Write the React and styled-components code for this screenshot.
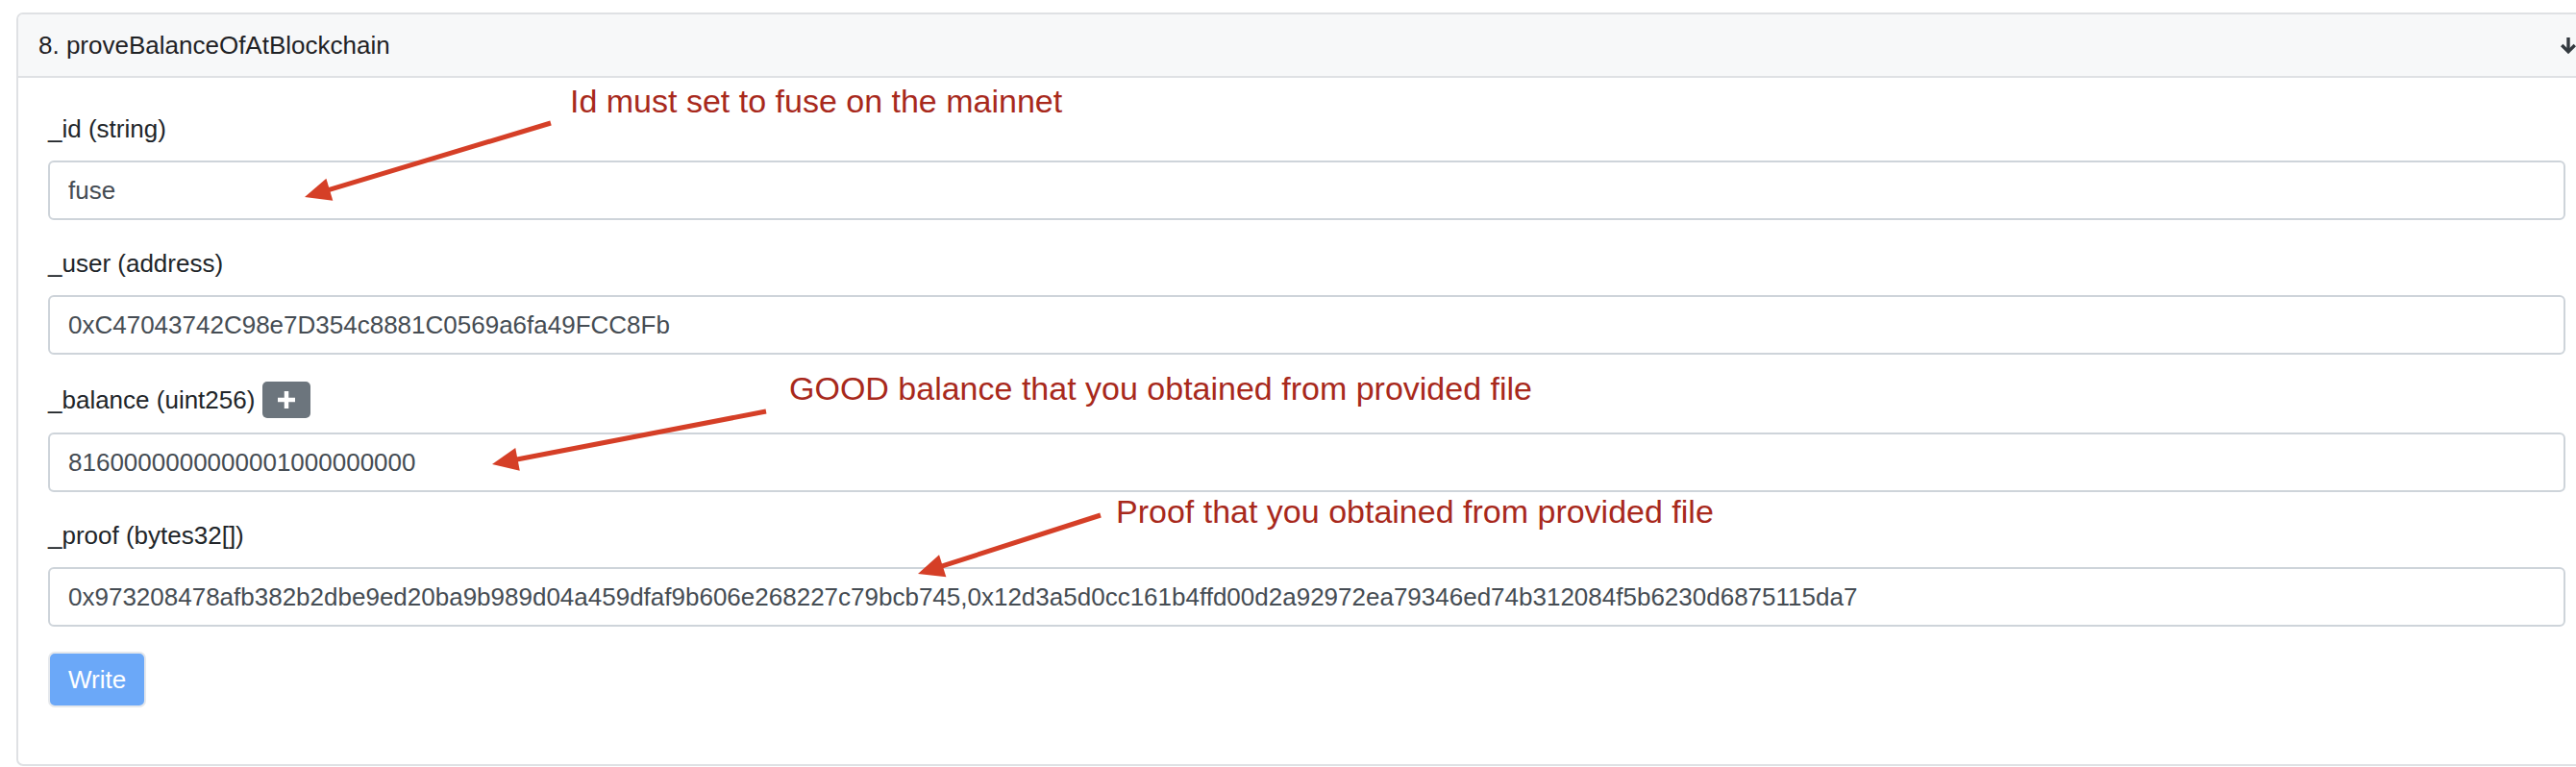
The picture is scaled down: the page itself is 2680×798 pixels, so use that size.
import React from 'react';
import styled, { createGlobalStyle } from 'styled-components';

const GlobalStyle = createGlobalStyle`
  html, body {
    margin: 0;
    background: #ffffff;
    overflow: hidden;
  }
  body {
    font-family: "Liberation Sans", Arial, Helvetica, sans-serif;
    color: #212529;
  }
`;

const Page = styled.div`
  position: relative;
  width: 2680px;
  height: 798px;
  padding: 13px 0 0 17px;
  box-sizing: border-box;
`;

const Card = styled.section`
  width: 2685px;
  box-sizing: border-box;
  border: 2px solid #dfe1e4;
  border-radius: 7px;
  background: #ffffff;
  overflow: hidden;
`;

const CardHeader = styled.header`
  display: flex;
  align-items: center;
  justify-content: space-between;
  height: 66px;
  box-sizing: border-box;
  padding: 0 19px 0 21px;
  background: #f7f8f9;
  border-bottom: 2px solid #dfe1e4;
  font-size: 26px;
  color: #1f2225;
`;

const CardBody = styled.div`
  padding: 34px 31px 59px 31px;
`;

const FormGroup = styled.div`
  margin-bottom: 26px;
`;

const Label = styled.label`
  display: flex;
  align-items: center;
  gap: 8px;
  height: ${({ $tall }) => ($tall ? '42px' : '39px')};
  margin-bottom: 13px;
  font-size: 26px;
  line-height: 39px;
  color: #212529;
`;

const Input = styled.div`
  display: flex;
  align-items: center;
  height: 62px;
  box-sizing: border-box;
  padding: 0 19px;
  border: 2px solid #ced4da;
  border-radius: 6px;
  font-size: 26px;
  color: #454c53;
  white-space: nowrap;
  overflow: hidden;
`;

const AddButton = styled.span`
  display: inline-flex;
  align-items: center;
  justify-content: center;
  width: 50px;
  height: 38px;
  border-radius: 5px;
  background: #6c757d;
`;

const WriteButton = styled.button`
  display: block;
  height: 58px;
  padding: 0 19px;
  border: 2px solid #e5e8ec;
  border-radius: 7px;
  background: #6ba8f8;
  color: #ffffff;
  font-family: inherit;
  font-size: 26px;
`;

const Note = styled.div`
  position: absolute;
  left: ${({ $x }) => $x}px;
  top: ${({ $y }) => $y}px;
  font-size: 34px;
  line-height: 1;
  color: #a8291c;
  white-space: nowrap;
`;

const Overlay = styled.svg`
  position: absolute;
  left: 0;
  top: 0;
  pointer-events: none;
`;

const arrows = [
  { tail: [573, 128], tip: [317, 205] },
  { tail: [797, 428], tip: [512, 483] },
  { tail: [1145, 536], tip: [955, 597] },
];

function Arrow({ tail, tip }) {
  const dx = tip[0] - tail[0];
  const dy = tip[1] - tail[1];
  const len = Math.hypot(dx, dy);
  const ux = dx / len;
  const uy = dy / len;
  const headLen = 27;
  const half = 12;
  const bx = tip[0] - ux * headLen;
  const by = tip[1] - uy * headLen;
  const pts = [
    `${tip[0]},${tip[1]}`,
    `${bx - uy * half},${by + ux * half}`,
    `${bx + uy * half},${by - ux * half}`,
  ].join(' ');
  return (
    <g>
      <line
        x1={tail[0]}
        y1={tail[1]}
        x2={bx + ux * 2}
        y2={by + uy * 2}
        stroke="#d53f27"
        strokeWidth="5"
      />
      <polygon points={pts} fill="#d53f27" />
    </g>
  );
}

const ArrowDown = () => (
  <svg width="18" height="18" viewBox="0 0 18 18">
    <path d="M9 1 V16" stroke="#343a40" strokeWidth="3.4" fill="none" />
    <path d="M2.2 9 L9 15.8 L15.8 9" stroke="#343a40" strokeWidth="3.4" fill="none" />
  </svg>
);

const Plus = () => (
  <svg width="22" height="22" viewBox="0 0 22 22">
    <path d="M11 2 V20 M2 11 H20" stroke="#ffffff" strokeWidth="4.5" />
  </svg>
);

const fields = [
  { label: '_id (string)', value: 'fuse' },
  { label: '_user (address)', value: '0xC47043742C98e7D354c8881C0569a6fa49FCC8Fb' },
  { label: '_balance (uint256)', value: '8160000000000001000000000', add: true },
  {
    label: '_proof (bytes32[])',
    value:
      '0x973208478afb382b2dbe9ed20ba9b989d04a459dfaf9b606e268227c79bcb745,0x12d3a5d0cc161b4ffd00d2a92972ea79346ed74b312084f5b6230d6875115da7',
  },
];

export default function App() {
  return (
    <>
      <GlobalStyle />
      <Page>
        <Card>
          <CardHeader>
            <span>8. proveBalanceOfAtBlockchain</span>
            <ArrowDown />
          </CardHeader>
          <CardBody>
            {fields.map((f) => (
              <FormGroup key={f.label}>
                <Label $tall={f.add}>
                  {f.label}
                  {f.add && (
                    <AddButton>
                      <Plus />
                    </AddButton>
                  )}
                </Label>
                <Input>{f.value}</Input>
              </FormGroup>
            ))}
            <WriteButton>Write</WriteButton>
          </CardBody>
        </Card>

        <Note $x={593} $y={88}>Id must set to fuse on the mainnet</Note>
        <Note $x={821} $y={387}>GOOD balance that you obtained from provided file</Note>
        <Note $x={1161} $y={515}>Proof that you obtained from provided file</Note>

        <Overlay width="2680" height="798">
          {arrows.map((a, i) => (
            <Arrow key={i} tail={a.tail} tip={a.tip} />
          ))}
        </Overlay>
      </Page>
    </>
  );
}
